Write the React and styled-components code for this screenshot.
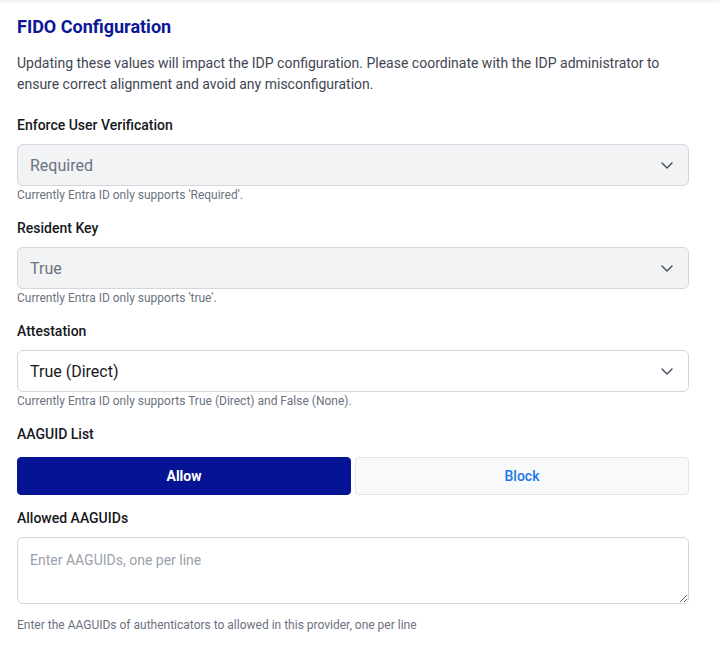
import React from "react";
import styled, { createGlobalStyle } from "styled-components";

const Global = createGlobalStyle`
  html, body { margin: 0; padding: 0; background: #ffffff; }
  body { font-family: Roboto, "Noto Sans", "Liberation Sans", sans-serif; }
  * { box-sizing: border-box; }
`;

const TopShade = styled.div`
  height: 5px;
  background: linear-gradient(to bottom, rgba(0, 0, 0, 0.05), rgba(0, 0, 0, 0));
`;

const Page = styled.main`
  padding: 0 30px 20px 17px;
`;

const Title = styled.h2`
  margin: 10px 0 0;
  font-size: 18px;
  line-height: 24px;
  font-weight: 700;
  color: #0b1796;
`;

const Description = styled.p`
  margin: 14px 0 0;
  font-size: 14px;
  line-height: 21px;
  color: #3f4652;
`;

const Field = styled.section`
  margin-top: ${(p) => p.$top}px;
`;

const Label = styled.label`
  display: block;
  font-size: 14px;
  line-height: 20px;
  font-weight: 500;
  color: #16181d;
`;

const SelectWrap = styled.div`
  position: relative;
  margin-top: 9px;
`;

const Select = styled.select`
  appearance: none;
  -webkit-appearance: none;
  display: block;
  width: 100%;
  height: 42px;
  padding: 0 40px 0 12px;
  border: 1px solid #d3d6dc;
  border-radius: 6px;
  font-family: inherit;
  font-size: 16px;
  color: ${(p) => (p.disabled ? "#6b7280" : "#16181d")};
  background: ${(p) => (p.disabled ? "#f2f3f5" : "#ffffff")};
  opacity: 1;
  outline: none;
`;

const Chevron = styled.svg`
  position: absolute;
  right: 16px;
  top: 18px;
  pointer-events: none;
`;

const Helper = styled.p`
  margin: ${(p) => p.$top || 1}px 0 0;
  font-size: 12px;
  line-height: 16px;
  color: #6b7280;
`;

const Toggle = styled.div`
  display: grid;
  grid-template-columns: 1fr 1fr;
  gap: 4px;
  margin-top: 13px;
`;

const ToggleButton = styled.button`
  height: 38px;
  border-radius: 4px;
  font-family: inherit;
  font-size: 14px;
  cursor: pointer;
  border: 1px solid ${(p) => (p.$active ? "#061394" : "#e3e5ea")};
  background: ${(p) => (p.$active ? "#061394" : "#f8f9fb")};
  color: ${(p) => (p.$active ? "#ffffff" : "#1b78e6")};
  font-weight: ${(p) => (p.$active ? 700 : 500)};
`;

const TextArea = styled.textarea`
  display: block;
  width: 100%;
  height: 67px;
  margin-top: 9px;
  padding: 12px 12px;
  border: 1px solid #d3d6dc;
  border-radius: 6px;
  font-family: inherit;
  font-size: 14px;
  line-height: 20px;
  color: #16181d;
  background: #ffffff;
  outline: none;
  &::placeholder {
    color: #9aa1ab;
  }
`;

const ChevronIcon = () => (
  <Chevron width="12" height="7" viewBox="0 0 12 7" fill="none">
    <path d="M1 1l5 5 5-5" stroke="#4b5563" strokeWidth="1.5" strokeLinecap="round" strokeLinejoin="round" />
  </Chevron>
);

const SelectField = ({ label, value, options, disabled, helper, top }) => (
  <Field $top={top}>
    <Label>{label}</Label>
    <SelectWrap>
      <Select disabled={disabled} defaultValue={value}>
        {options.map((o) => (
          <option key={o} value={o}>
            {o}
          </option>
        ))}
      </Select>
      <ChevronIcon />
    </SelectWrap>
    <Helper>{helper}</Helper>
  </Field>
);

export default function App() {
  const [mode, setMode] = React.useState("allow");
  return (
    <>
      <Global />
      <TopShade />
      <Page>
        <Title>FIDO Configuration</Title>
        <Description>
          Updating these values will impact the IDP configuration. Please coordinate with the IDP administrator to
          ensure correct alignment and avoid any misconfiguration.
        </Description>
        <SelectField
          top={20}
          label="Enforce User Verification"
          value="Required"
          options={["Required", "Preferred", "Discouraged"]}
          disabled
          helper="Currently Entra ID only supports 'Required'."
        />
        <SelectField
          top={15}
          label="Resident Key"
          value="True"
          options={["True", "False"]}
          disabled
          helper="Currently Entra ID only supports 'true'."
        />
        <SelectField
          top={15}
          label="Attestation"
          value="True (Direct)"
          options={["True (Direct)", "False (None)"]}
          helper="Currently Entra ID only supports True (Direct) and False (None)."
        />
        <Field $top={15}>
          <Label>AAGUID List</Label>
          <Toggle>
            <ToggleButton $active={mode === "allow"} onClick={() => setMode("allow")}>
              Allow
            </ToggleButton>
            <ToggleButton $active={mode === "block"} onClick={() => setMode("block")}>
              Block
            </ToggleButton>
          </Toggle>
        </Field>
        <Field $top={13}>
          <Label>Allowed AAGUIDs</Label>
          <TextArea placeholder="Enter AAGUIDs, one per line" />
          <Helper $top={13}>Enter the AAGUIDs of authenticators to allowed in this provider, one per line</Helper>
        </Field>
      </Page>
    </>
  );
}
